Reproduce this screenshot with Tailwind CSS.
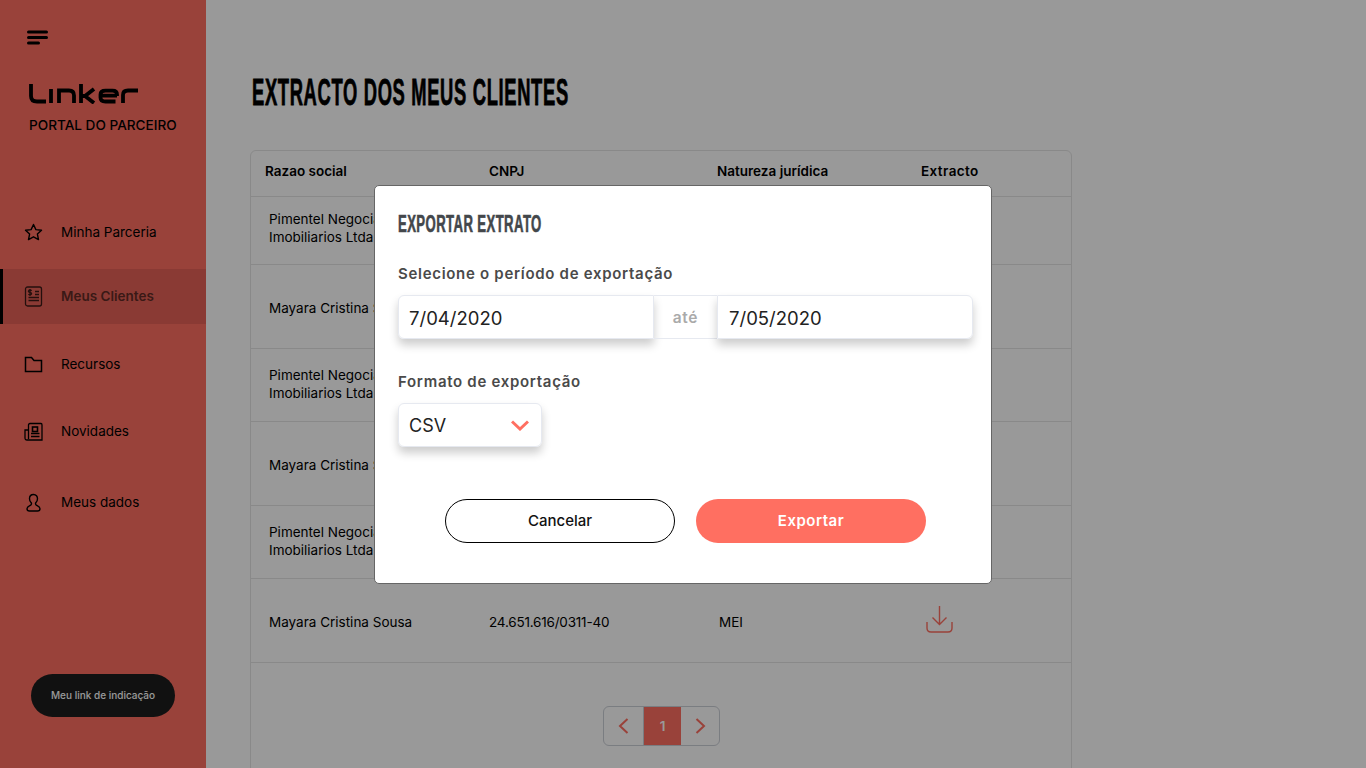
<!DOCTYPE html>
<html lang="pt-BR">
<head>
    <meta charset="UTF-8">
    <meta name="viewport" content="width=device-width, initial-scale=1.0">
    <title>Extracto dos meus clientes</title>
    <script src="https://cdn.jsdelivr.net/npm/@tailwindcss/browser@4"></script>
</head>
<body class="font-['Inter','Liberation_Sans',sans-serif] text-black">
    <div class="relative flex h-[768px] w-[1366px] overflow-hidden bg-white">

        <!-- sidebar -->
        <aside class="flex h-full w-[206px] shrink-0 flex-col bg-[#ff6f61]">
            <svg class="ml-[27px] mt-[30px]" width="21" height="16" viewBox="0 0 21 16" fill="none" stroke="#000" stroke-width="3" stroke-linecap="round">
                <path d="M1.500 2h18M1.500 7.500h18M1.500 13h10"/>
            </svg>

            <svg class="ml-[29px] mt-[38px]" width="110" height="20" viewBox="0 0 110 20" fill="none" stroke="#000" stroke-width="3.800">
                <path d="M2 0v12q0 5.500 6 5.500h9"/>
                <path d="M22 5v14"/>
                <path d="M30 19V6.500h10q5 0 5 5V19"/>
                <path d="M52 0v19M52 12h4l9-7M56 12l9 7"/>
                <path d="M88 11.600H71.500v-1q0-4 5-4h7q4.500 0 4.500 4v1.500M71.500 12v1.500q0 4 5 4h10"/>
                <path d="M94 19v-8q0-4.500 5-4.500h10"/>
            </svg>
            <p class="ml-[29px] mt-[12px] text-[13.600px] leading-[18px] font-medium">PORTAL DO PARCEIRO</p>

            <nav class="mt-[71px] flex flex-col text-[13.500px]">
                <a class="flex h-[55px] items-center gap-[18px] pl-[24px]">
                    <svg width="19" height="19" viewBox="0 0 19 19" fill="none" stroke="#000" stroke-width="1.400" stroke-linejoin="round">
                        <path d="M9.500 1.500l2.400 5.100 5.600.7-4.100 3.800 1.100 5.500-5-2.800-5 2.800 1.100-5.500L1.500 7.300l5.600-.7z"/>
                    </svg>
                    Minha Parceria
                </a>
                <a class="mt-[9px] flex h-[55px] items-center gap-[18px] border-l-[3px] border-black bg-[#e66257] pl-[21px] font-semibold text-[#612b26]">
                    <svg width="19" height="21" viewBox="0 0 19 21" fill="none" stroke="#3d1a17" stroke-width="1.300">
                        <rect x="1.500" y="1" width="16" height="19" rx="2"/>
                        <path d="M11 5.500h4M11 8.500h4M4.500 11.500h10.500M4.500 14.500h10.500"/>
                        <path d="M7.500 5q-.5-1-1.500-1t-1.500 1 1.500 1.500 1.500 1.500-1.500 1-1.500-1M6 3v7"/>
                    </svg>
                    Meus Clientes
                </a>
                <a class="mt-[13px] flex h-[55px] items-center gap-[18px] pl-[24px]">
                    <svg width="19" height="17" viewBox="0 0 19 17" fill="none" stroke="#000" stroke-width="1.500">
                        <path d="M1.500 15.500V1.500h6l2.500 3h7.500v11z"/>
                    </svg>
                    Recursos
                </a>
                <a class="mt-[12px] flex h-[55px] items-center gap-[18px] pl-[24px]">
                    <svg width="19" height="20" viewBox="0 0 19 20" fill="none" stroke="#000" stroke-width="1.300">
                        <path d="M4.500 17V3q0-1.500 1.500-1.500h11q1 0 1 1.500v15H3q-2 0-2-2V8h3.500"/>
                        <rect x="8.500" y="5" width="5" height="4.500" stroke-width="1.600"/>
                        <path d="M7 11.500h8.500M7 14.500h8.500"/>
                    </svg>
                    Novidades
                </a>
                <a class="mt-[16px] flex h-[55px] items-center gap-[18px] pl-[24px]">
                    <svg width="19" height="20" viewBox="0 0 19 20" fill="none" stroke="#000" stroke-width="1.400">
                        <path d="M9.500 1.500c-2.700 0-4 2-4 4.300 0 1.700.7 3 1.700 4 .5.600.3 1.800-.5 2.300-1.500.9-3.700 1.500-3.700 3.600 0 1.300 1 2.300 2.500 2.300h8c1.500 0 2.500-1 2.500-2.300 0-2.100-2.200-2.700-3.700-3.600-.8-.5-1-1.700-.5-2.300 1-1 1.700-2.300 1.700-4 0-2.300-1.300-4.300-4-4.300z"/>
                    </svg>
                    Meus dados
                </a>
            </nav>

            <button class="ml-[31px] mt-[144px] h-[43px] w-[144px] rounded-full bg-[#1d1d1d] text-[10px] font-medium text-white">Meu link de indicação</button>
        </aside>

        <!-- page content -->
        <main class="flex-1 pl-[44px]">
            <h1 class="ml-[2px] mt-[73px] h-[40px] origin-left scale-x-[0.51] whitespace-nowrap font-['Liberation_Sans',sans-serif] text-[36px] leading-[40px] font-bold tracking-[1.300px] [-webkit-text-stroke:0.8px_black]">EXTRACTO DOS MEUS CLIENTES</h1>

            <div class="mt-[37px] h-[700px] w-[822px] rounded-t-md border border-[#e5e5e5] text-[13.500px]">
                <div class="grid h-[46px] grid-cols-[238px_228px_204px_1fr] items-center border-b border-[#e5e5e5] pb-[5px] font-semibold">
                    <span class="pl-[14px]">Razao social</span>
                    <span>CNPJ</span>
                    <span>Natureza jurídica</span>
                    <span class="tracking-[0.4px]">Extracto</span>
                </div>
                <div class="grid h-[68px] grid-cols-[238px_228px_204px_1fr] items-center border-b border-[#e5e5e5] pb-[6px] leading-[18px]">
                    <span class="pl-[18px]">Pimentel Negociações<br>Imobiliarios Ltda</span>
                </div>
                <div class="grid h-[84px] grid-cols-[238px_228px_204px_1fr] items-center border-b border-[#e5e5e5] pt-[2px] leading-[18px]">
                    <span class="pl-[18px]">Mayara Cristina Sousa</span>
                </div>
                <div class="grid h-[73px] grid-cols-[238px_228px_204px_1fr] items-center border-b border-[#e5e5e5] pb-[2px] leading-[18px]">
                    <span class="pl-[18px]">Pimentel Negociações<br>Imobiliarios Ltda</span>
                </div>
                <div class="grid h-[84px] grid-cols-[238px_228px_204px_1fr] items-center border-b border-[#e5e5e5] pt-[2px] leading-[18px]">
                    <span class="pl-[18px]">Mayara Cristina Sousa</span>
                </div>
                <div class="grid h-[73px] grid-cols-[238px_228px_204px_1fr] items-center border-b border-[#e5e5e5] pb-[2px] leading-[18px]">
                    <span class="pl-[18px]">Pimentel Negociações<br>Imobiliarios Ltda</span>
                </div>
                <div class="grid h-[84px] grid-cols-[238px_228px_204px_1fr] items-center border-b border-[#e5e5e5] pt-[2px] leading-[18px]">
                    <span class="pl-[18px]">Mayara Cristina Sousa</span>
                    <span class="tracking-[-0.2px]">24.651.616/0311-40</span>
                    <span class="pl-[2px]">MEI</span>
                    <svg class="mb-[6px] ml-[5px]" width="27" height="28" viewBox="0 0 27 28" fill="none" stroke="#ff6f61" stroke-width="1.400">
                        <path d="M13.500 1v18M6.500 12.500l7 7 7-7"/>
                        <path d="M1 17v6q0 4 4 4h17q4 0 4-4v-6"/>
                    </svg>
                </div>

                <div class="mt-[43px] ml-[352px] flex h-[40px] w-[117px] rounded-md border border-[#ccd0d8]">
                    <div class="flex w-[39px] items-center justify-center">
                        <svg width="11" height="16" viewBox="0 0 11 16" fill="none" stroke="#ff6f61" stroke-width="2"><path d="M9.500 1L2 8l7.500 7"/></svg>
                    </div>
                    <div class="flex w-[39px] items-center justify-center border-l border-[#ccd0d8] bg-[#ff6f61] text-[13.500px] font-semibold text-white">1</div>
                    <div class="flex w-[38px] items-center justify-center">
                        <svg width="11" height="16" viewBox="0 0 11 16" fill="none" stroke="#ff6f61" stroke-width="2"><path d="M1.500 1L9 8l-7.500 7"/></svg>
                    </div>
                </div>
            </div>
        </main>

        <!-- overlay -->
        <div class="absolute inset-0 bg-black/40"></div>

        <!-- modal -->
        <div class="absolute left-[374px] top-[185px] h-[399px] w-[618px] rounded-[5px] border border-[#666] bg-white pl-[23px]">
            <h2 class="mt-[24px] h-[28px] origin-left scale-x-[0.56] whitespace-nowrap font-['Liberation_Sans',sans-serif] text-[23.500px] leading-[28px] font-bold tracking-[0.7px] text-[#43474b] [-webkit-text-stroke:0.6px_#43474b]">EXPORTAR EXTRATO</h2>

            <p class="mt-[26px] text-[15px] leading-[20px] font-semibold tracking-[0.7px] text-[#4a4a4a]">Selecione o período de exportação</p>
            <div class="mt-[11px] flex h-[44px] w-[575px] text-[18.500px] text-[#222]">
                <div class="flex w-[256px] items-center rounded-l-md border border-[#e6e9f0] pl-[10px] pt-[3px] shadow-[0_6px_10px_rgba(0,0,0,0.2)]">7/04/2020</div>
                <div class="flex w-[63px] items-center justify-center border-y border-[#e6e9f0] pt-[2px] text-[15.500px] font-semibold tracking-[0.7px] text-[#aaa]">até</div>
                <div class="flex w-[256px] items-center rounded-r-md border border-[#e6e9f0] pl-[11px] pt-[3px] shadow-[0_6px_10px_rgba(0,0,0,0.2)]">7/05/2020</div>
            </div>

            <p class="mt-[33px] text-[15px] leading-[20px] font-semibold tracking-[0.7px] text-[#4a4a4a]">Formato de exportação</p>
            <div class="mt-[11px] flex h-[44px] w-[144px] items-center justify-between rounded-md border border-[#e6e9f0] pl-[10px] pr-[12px] text-[18px] text-[#222] shadow-[0_6px_10px_rgba(0,0,0,0.2)]">
                CSV
                <svg width="18" height="11" viewBox="0 0 18 11" fill="none" stroke="#ff6f61" stroke-width="3"><path d="M1 1.500l8 7.500 8-7.500"/></svg>
            </div>

            <div class="ml-[47px] mt-[52px] flex gap-[21px] text-[15px]">
                <button class="h-[44px] w-[230px] rounded-full border border-black font-medium text-[#111]">Cancelar</button>
                <button class="h-[44px] w-[230px] rounded-full bg-[#ff6f61] font-semibold tracking-[0.5px] text-white">Exportar</button>
            </div>
        </div>
    </div>
</body>
</html>
